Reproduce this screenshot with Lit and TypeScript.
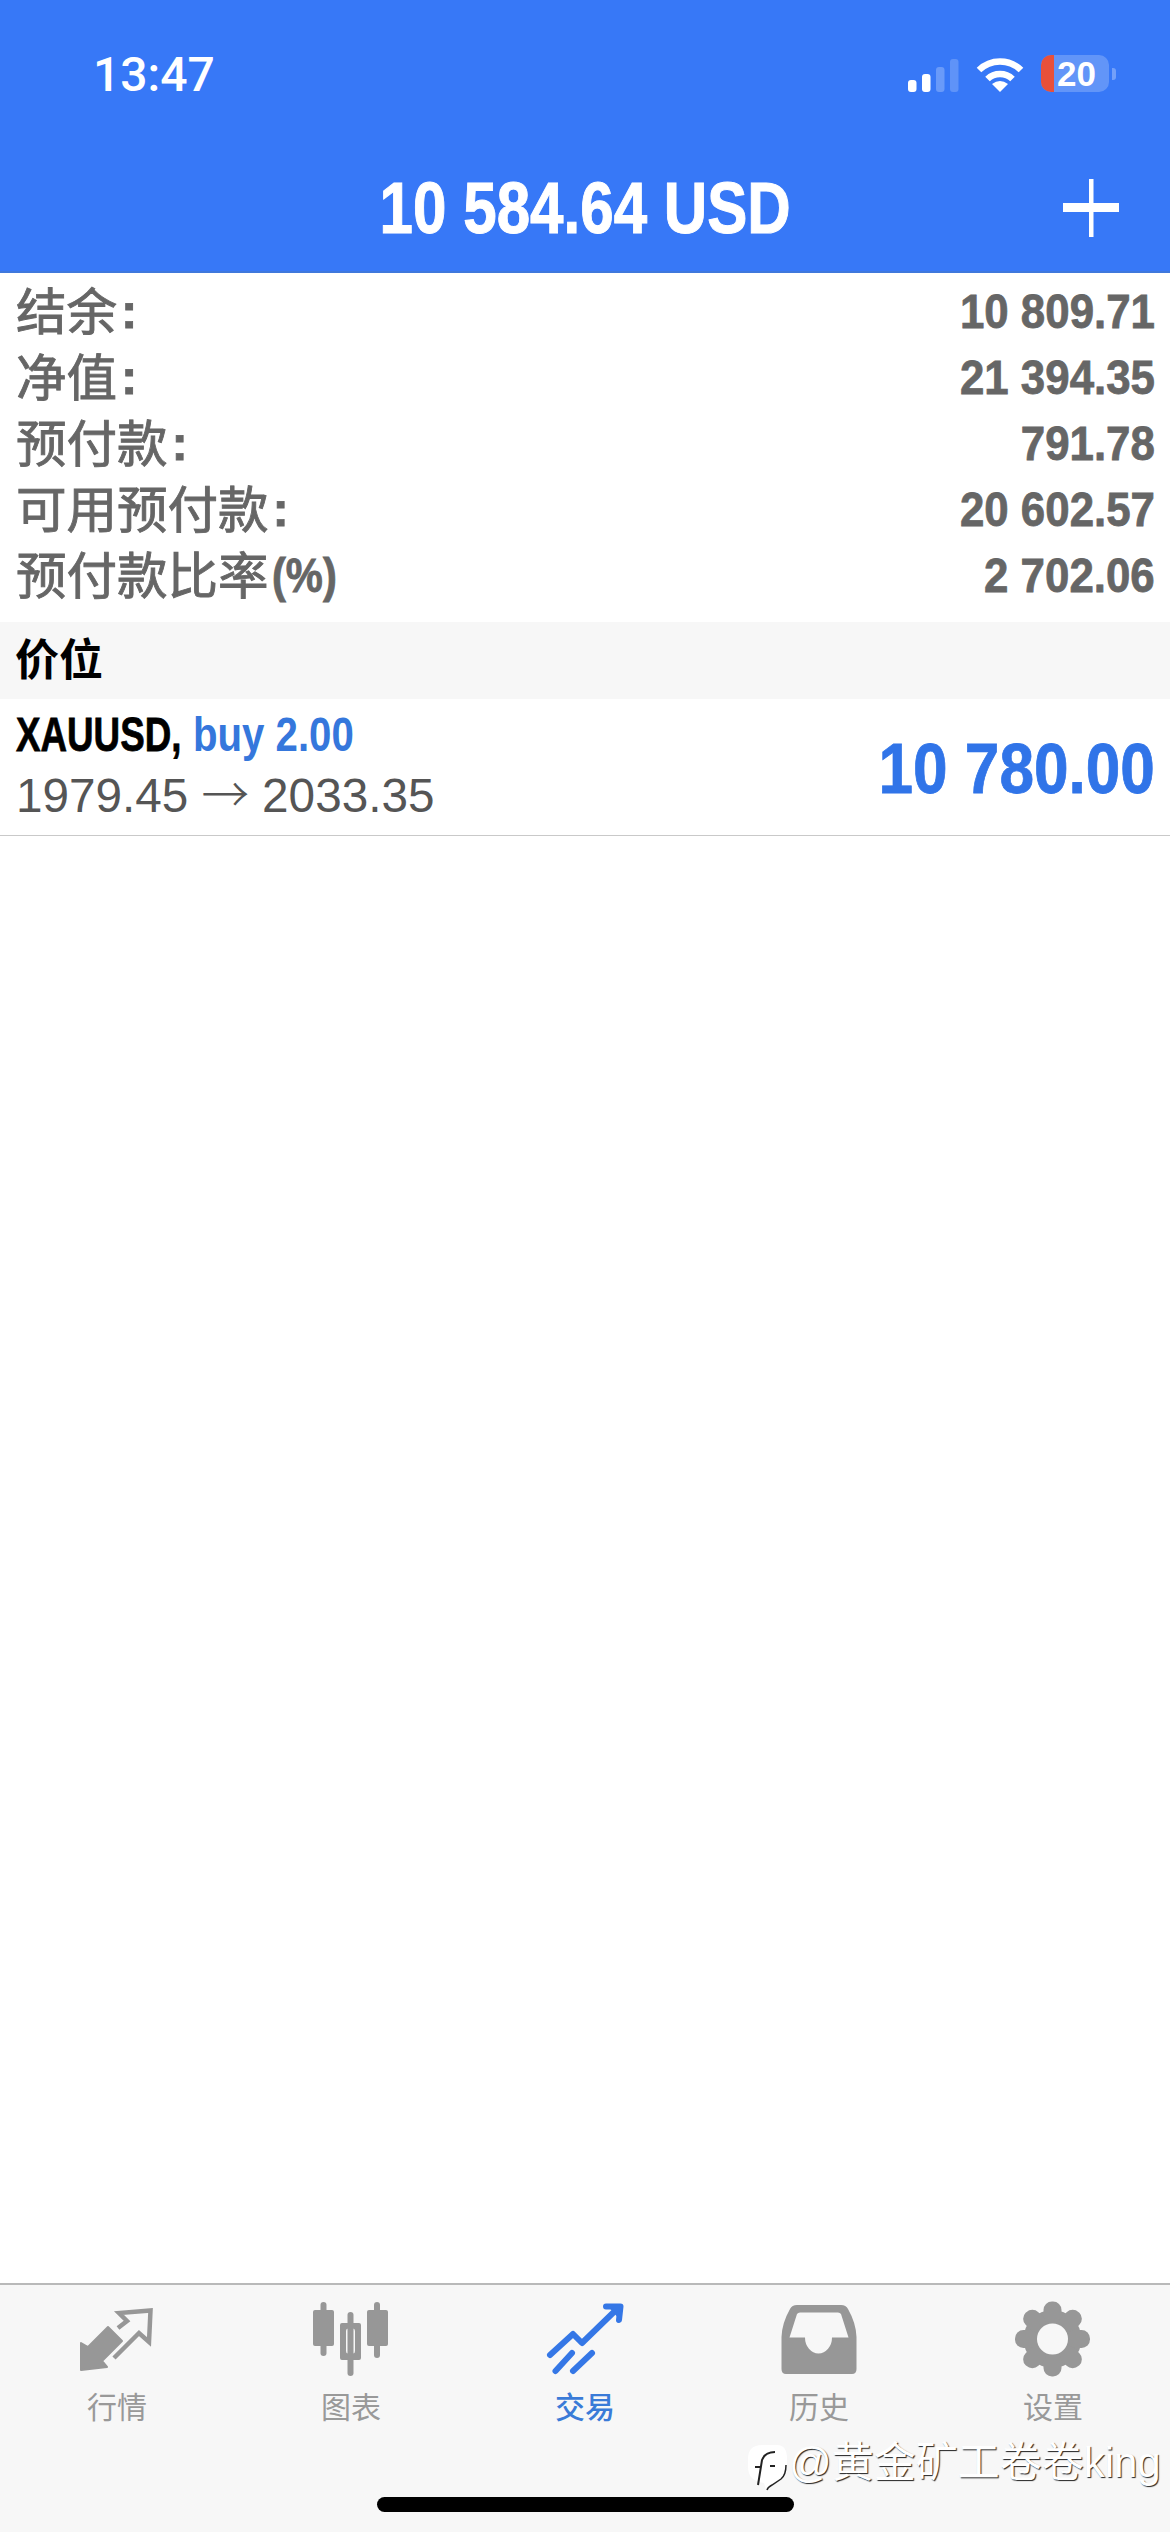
import { LitElement, html, css, svg } from "lit";
import { customElement } from "lit/decorators.js";

const ACCOUNT = [
  ["结余", "10 809.71"],
  ["净值", "21 394.35"],
  ["预付款", "791.78"],
  ["可用预付款", "20 602.57"],
  ["预付款比率", "2 702.06"],
];

const gear = svg`<g fill="#979797">
  <circle cx="44.5" cy="44" r="29"></circle>
  ${[0, 45, 90, 135, 180, 225, 270, 315].map(
    (a) => svg`<rect x="35.5" y="6.5" width="18" height="24" rx="8.5" transform="rotate(${a} 44.5 44)"></rect>`
  )}
  </g><circle cx="44.5" cy="44" r="15.5" fill="#f7f7f7"></circle>`;

const ICONS: Record<string, unknown> = {
  quotes: svg`<path fill="#979797" stroke="#979797" stroke-width="2" stroke-linejoin="round" d="M11 48 L18 52 L38 32 L52 46 L32 66 L37 72 L11 75 Z"></path>
    <path fill="none" stroke="#979797" stroke-width="4.5" d="M44 63 L69 38 L79 47 L80.5 15.5 L49 18 L57 26 L48 33"></path>`,
  chart: svg`<g fill="#979797">
    <rect x="15.5" y="7" width="6" height="54" rx="3"></rect>
    <rect x="8" y="15" width="21" height="36" rx="2"></rect>
    <rect x="42.5" y="17" width="6" height="64" rx="3"></rect>
    <path fill-rule="evenodd" d="M37 28 H54 Q56 28 56 30 V63 Q56 65 54 65 H37 Q35 65 35 63 V30 Q35 28 37 28 Z M43 33.5 Q41 33.5 41 36 V56 Q41 58.5 43 58.5 H48 Q50 58.5 50 56 V36 Q50 33.5 48 33.5 Z"></path>
    <rect x="69" y="7" width="6" height="56" rx="3"></rect>
    <rect x="62" y="15" width="21" height="36" rx="2"></rect></g>`,
  trade: svg`<g fill="none" stroke="#3577e6" stroke-width="6" stroke-linecap="round" stroke-linejoin="round">
    <path d="M10 60 L33 39 L42 48 L77 14"></path>
    <path d="M66 11.5 L80.5 11.5 L79 25" stroke-width="6"></path>
    <path d="M15.5 76 L32 58"></path><path d="M33 76 L52 58"></path></g>
    <path d="M66 9 L82 9 L80 25 Z" fill="#3577e6"></path>`,
  history: svg`<path fill="#979797" fill-rule="evenodd" d="M22 10 H66 Q71 10 73 14 Q81 28 81.5 42 V74 Q81.5 79 77 79 H11 Q6.5 79 6.5 74 V42 Q7 28 15 14 Q17 10 22 10 Z M25 17.5 Q23 17.5 22 19 L14.5 42.5 H30 A13.5 16 0 0 0 57 42.5 H73.5 L66 19 Q65 17.5 63 17.5 Z"></path>`,
  settings: gear,
};

const TABS = [
  ["quotes", "行情", "2 0 90 85"],
  ["chart", "图表", "1 0 90 85"],
  ["trade", "交易", "0 0 90 85"],
  ["history", "历史", "-1 0 90 85"],
  ["settings", "设置", "0 0 90 85"],
];

@customElement("app-root")
export class AppRoot extends LitElement {
  static styles = css`
    :host {
      display: block;
      width: 1170px;
      height: 2532px;
      font-family: "Liberation Sans", "Noto Sans CJK SC", sans-serif;
    }
    .page {
      width: 100%;
      height: 100%;
      display: flex;
      flex-direction: column;
      background: #fff;
    }
    .header {
      height: 273px;
      box-sizing: border-box;
      background: #3778f7;
      border-bottom: 2px solid #3f78dc;
      color: #fff;
      padding-top: 55px;
    }
    .status {
      height: 37px;
      display: flex;
      align-items: center;
      padding: 0 54px 0 93px;
    }
    .time {
      font: 500 48px/37px Roboto, "Liberation Sans", sans-serif;
      margin-top: 2px;
    }
    .status-icons {
      margin-left: auto;
      display: flex;
      align-items: flex-end;
    }
    .signal {
      display: block;
      margin-right: 17px;
    }
    .wifi {
      display: block;
      margin-right: 17px;
    }
    .battery {
      width: 68px;
      height: 37px;
      border-radius: 10px;
      background: rgba(255, 255, 255, 0.22);
      overflow: hidden;
      display: flex;
      align-items: center;
    }
    .battery-low {
      width: 13px;
      height: 100%;
      flex: none;
      background: #e8503a;
    }
    .battery-text {
      font: 700 35px/37px "Liberation Sans", sans-serif;
      margin-left: 3px;
    }
    .nub {
      width: 4px;
      height: 12px;
      margin: 0 0 12px 3px;
      border-radius: 0 3px 3px 0;
      background: rgba(255, 255, 255, 0.3);
    }
    .title-row {
      margin-top: 76px;
      height: 80px;
      display: grid;
      grid-template-columns: 1fr auto 1fr;
      align-items: center;
    }
    .title {
      grid-column: 2;
      font: 700 72px/80px "Liberation Sans", sans-serif;
      white-space: nowrap;
      transform: scaleX(0.835);
      transform-origin: center;
      -webkit-text-stroke: 1px #fff;
    }
    .plus {
      justify-self: end;
      display: block;
      margin-right: 51px;
    }
    .main {
      flex: 1;
      min-height: 0;
    }
    .account {
      padding: 5px 15px 14px 16px;
    }
    .line {
      height: 66px;
      display: flex;
      justify-content: space-between;
      align-items: center;
      font-size: 49px;
      line-height: 66px;
      font-weight: 700;
      color: #666;
    }
    .label {
      display: flex;
      align-items: center;
      margin-top: 3px;
      font-size: 50.5px;
      font-weight: 400;
      -webkit-text-stroke: 0.9px #666;
      white-space: nowrap;
    }
    .colon {
      margin: -3px 0 0 4px;
      font-size: 49px;
      font-weight: 700;
    }
    .cond-l,
    .cond-r {
      display: inline-block;
      white-space: nowrap;
    }
    .cond-l {
      transform-origin: left center;
    }
    .cond-r {
      transform-origin: right center;
    }
    .value {
      transform: scaleX(0.895);
      -webkit-text-stroke: 0.8px #666;
    }
    .pct {
      margin: -3px 0 0 3px;
      transform: scaleX(0.85);
      font-size: 49px;
      font-weight: 700;
    }
    .section {
      height: 77px;
      box-sizing: border-box;
      padding-left: 15px;
      background: #f7f7f7;
      font-size: 44px;
      line-height: 77px;
      font-weight: 700;
      color: #000;
    }
    .position {
      height: 137px;
      box-sizing: border-box;
      border-bottom: 1px solid #c9c9c9;
      padding: 4px 15px 8px 16px;
      display: flex;
      justify-content: space-between;
      align-items: center;
    }
    .pos-head {
      height: 62px;
      display: flex;
      font-size: 49px;
      line-height: 62px;
      font-weight: 700;
      color: #000;
    }
    .sym {
      width: 177px;
      flex: none;
      transform: scaleX(0.75);
      -webkit-text-stroke: 0.8px #000;
    }
    .buy {
      color: #3577dc;
      transform: scaleX(0.82);
    }
    .pos-prices {
      height: 62px;
      font-size: 47.7px;
      line-height: 62px;
      color: #555;
      white-space: nowrap;
    }
    .arrow {
      margin: 0 13px;
      font-family: "Noto Sans CJK SC", sans-serif;
      font-weight: 300;
      line-height: 1;
    }
    .profit {
      margin-top: 7px;
      font-size: 71px;
      line-height: 80px;
      font-weight: 700;
      color: #3074e8;
      transform: scaleX(0.875);
      -webkit-text-stroke: 0.8px #3074e8;
    }
    .tabbar {
      position: relative;
      height: 249px;
      box-sizing: border-box;
      border-top: 2px solid #b9b9b9;
      background: #f7f7f7;
      padding-top: 10px;
    }
    .tabs {
      display: grid;
      grid-template-columns: repeat(5, 234px);
    }
    .tab {
      display: flex;
      flex-direction: column;
      align-items: center;
      font: 400 30px/36px "Noto Sans CJK SC", sans-serif;
      color: #999;
    }
    .tab.active {
      color: #3a7bd8;
      font-weight: 500;
    }
    .tab svg {
      display: block;
      margin-bottom: 7px;
    }
    .home {
      width: 417px;
      height: 15px;
      margin: 74px 0 0 377px;
      border-radius: 8px;
      background: #000;
    }
    .watermark {
      position: absolute;
      left: 747px;
      top: 153px;
      display: flex;
      align-items: flex-start;
      font: 400 42px/50px "Liberation Sans", "Noto Sans CJK SC", sans-serif;
      color: #fff;
      text-shadow: 1px 1px 1px #222;
      white-space: nowrap;
    }
    .wm-logo {
      display: block;
      margin: 7px -2px 0 0;
    }
  `;

  render() {
    return html`<div class="page">
      <div class="header">
        <div class="status">
          <div class="time">13:47</div>
          <div class="status-icons">
            <svg class="signal" width="51" height="33" viewBox="0 0 51 33">
              <rect x="0" y="21" width="8.5" height="12" rx="3" fill="#fff"></rect>
              <rect x="14" y="15" width="8.5" height="18" rx="3" fill="#fff"></rect>
              <rect x="28" y="8" width="8.5" height="25" rx="3" fill="#fff" opacity=".25"></rect>
              <rect x="42" y="0" width="8.5" height="33" rx="3" fill="#fff" opacity=".2"></rect>
            </svg>
            <svg class="wifi" width="48" height="36" viewBox="0 0 48 36">
              <g fill="none" stroke="#fff" stroke-width="6.5">
                <path d="M3 14 A 30 30 0 0 1 45 14"></path>
                <path d="M11.5 23 A 18 18 0 0 1 36.5 23"></path>
              </g>
              <path d="M24 36 L16 28 Q24 22 32 28 Z" fill="#fff"></path>
            </svg>
            <div class="battery">
              <div class="battery-low"></div>
              <div class="battery-text">20</div>
            </div>
            <div class="nub"></div>
          </div>
        </div>
        <div class="title-row">
          <div class="title">10 584.64 USD</div>
          <svg class="plus" width="56" height="58" viewBox="0 0 56 58">
            <rect x="26" y="0" width="4.5" height="58" fill="#fff"></rect>
            <rect x="0" y="24" width="56" height="9" fill="#fff"></rect>
          </svg>
        </div>
      </div>
      <div class="main">
        <div class="account">
          ${ACCOUNT.map(
            ([label, value], i) => html`<div class="line">
              <span class="label"
                >${label}${i === 4
                  ? html`<span class="cond-l pct">(%)</span>`
                  : html`<span class="colon">:</span>`}</span
              >
              <span class="cond-r value">${value}</span>
            </div>`
          )}
        </div>
        <div class="section">价位</div>
        <div class="position">
          <div>
            <div class="pos-head">
              <span class="cond-l sym">XAUUSD,</span>
              <span class="cond-l buy">buy 2.00</span>
            </div>
            <div class="pos-prices">1979.45<span class="arrow">→</span>2033.35</div>
          </div>
          <div class="cond-r profit">10 780.00</div>
        </div>
      </div>
      <div class="tabbar">
        <div class="tabs">
          ${TABS.map(
            ([icon, label, box]) => html`<div class="tab ${icon === "trade" ? "active" : ""}">
              <svg width="90" height="85" viewBox=${box}>${ICONS[icon]}</svg>
              ${label}
            </div>`
          )}
        </div>
        <div class="home"></div>
        <div class="watermark">
          <svg class="wm-logo" width="44" height="50" viewBox="0 0 44 50">
            <path d="M15 0 H30 Q40 0 40 14 V24 Q40 34 28 38 Q24 42 19 45 Q18 41 17 38 Q1 36 1 22 V14 Q1 0 15 0 Z" fill="#fff"></path>
            <path d="M28 7 Q18 7 15 15 L11 40 M8 22 H13 M23 21 H28" fill="none" stroke="#222" stroke-width="2"></path>
            <path d="M39 20 Q39 30 34 34 Q28 38 25 40 Q21 42 20 45" fill="none" stroke="#222" stroke-width="1.5"></path>
          </svg>
          <span>@黄金矿工卷卷king</span>
        </div>
      </div>
    </div>`;
  }
}
